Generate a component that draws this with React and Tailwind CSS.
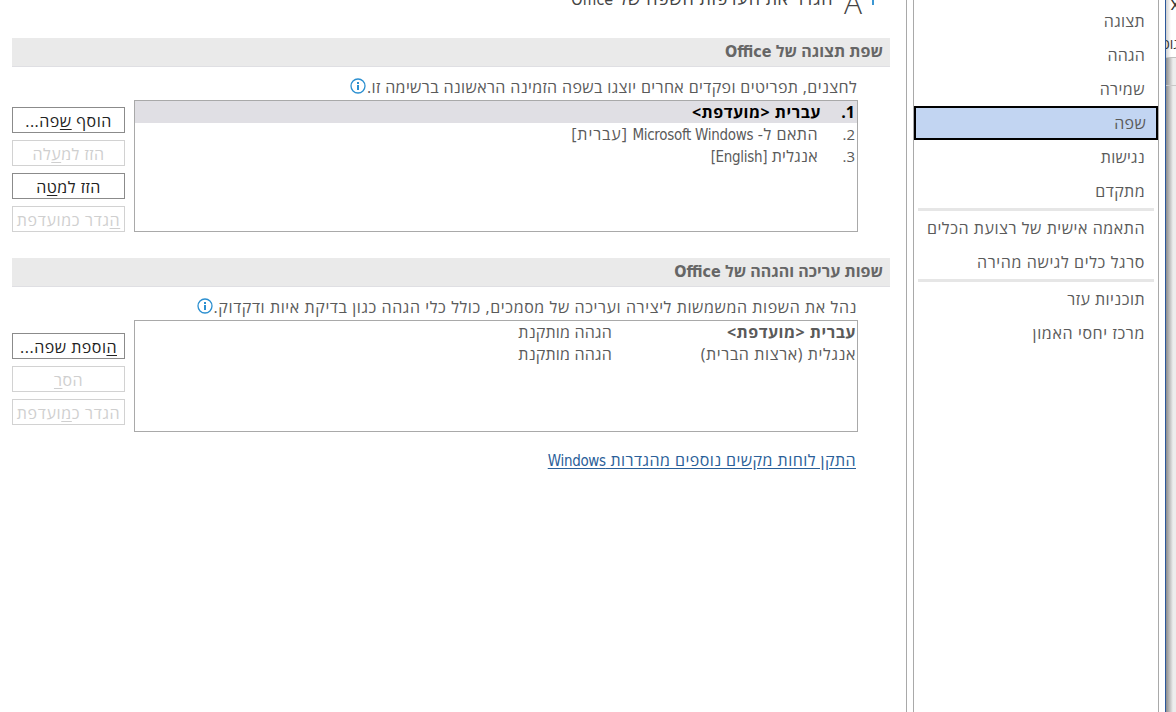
import { Fragment } from "react";

const categories = [
  { label: "תצוגה", cls: "tracking-[0.3px]" },
  { label: "הגהה", cls: "tracking-[0.2px]" },
  { label: "שמירה", cls: "tracking-[0.45px]" },
  { label: "שפה", cls: "tracking-[0.3px]", active: true },
  { label: "נגישות", cls: "tracking-[0.25px]" },
  { label: "מתקדם", cls: "tracking-[0.4px]", divider: true },
  { label: "התאמה אישית של רצועת הכלים", cls: "tracking-[0.55px]" },
  { label: "סרגל כלים לגישה מהירה", cls: "tracking-[0.62px]", divider: true },
  { label: "תוכניות עזר", cls: "tracking-[0.45px]" },
  { label: "מרכז יחסי האמון", cls: "tracking-[0.63px]" },
];

function InfoIcon() {
  return (
    <svg width="16" height="16" viewBox="0 0 16 16" className="mr-px mb-px shrink-0" fill="none">
      <circle cx="8" cy="8" r="7" stroke="#2b8fd0" strokeWidth="1.3" />
      <path d="M7 4h2v2H7zM7 7h2v5H7z" fill="#2b8fd0" />
    </svg>
  );
}

// Latin words use a narrower face than the Hebrew around them
function Latin({ children, cls = "text-[15px] tracking-[-0.3px]" }) {
  return (
    <span dir="ltr" className={`font-['DejaVu_Sans_Condensed','DejaVu_Sans',sans-serif] ${cls}`}>
      {children}
    </span>
  );
}

function Button({ before = "", hot, after = "", disabled, cls = "tracking-[0.5px]" }) {
  return (
    <button
      className={`flex h-[26px] w-[113px] items-center justify-center border bg-white pt-px whitespace-nowrap ${
        disabled ? "border-[#d2d2d2] text-[#cfcfcf]" : "border-[#8b8b8b] text-[#222]"
      }`}
    >
      <span className={cls}>
        {before}
        <span className="underline underline-offset-2">{hot}</span>
        {after}
      </span>
    </button>
  );
}

function SectionTitle({ children }) {
  return (
    <h2 className="flex h-[29px] items-center border-b border-[#dfdfe3] bg-[#eaeaea] pr-[7px] font-bold text-[#666]">
      <span>
        {children} <Latin cls="text-base">Office</Latin>
      </span>
    </h2>
  );
}

function Sidebar() {
  return (
    <nav className="w-[246px] shrink-0 border-x border-[#a9a9a9] pt-1">
      {categories.map((c) => (
        <Fragment key={c.label}>
          <div
            className={`flex h-[34px] items-center whitespace-nowrap ${
              c.active ? "border-2 border-black bg-[#c2d5f2] pr-[10px]" : "pr-[13px]"
            }`}
          >
            <span className={c.cls}>{c.label}</span>
          </div>
          {c.divider && <div className="mx-1 h-[3px] bg-[#e6e6e6]" />}
        </Fragment>
      ))}
    </nav>
  );
}

export default function App() {
  return (
    <div
      dir="rtl"
      className="flex h-[712px] w-[1176px] overflow-hidden bg-white font-['Open_Sans','DejaVu_Sans',sans-serif] text-[16px] leading-[22px] text-[#5a5a5a]"
    >
      {/* sliver of the document window behind the dialog */}
      <div className="w-[10px] shrink-0 overflow-hidden bg-linear-to-r from-[#8c8c8c] to-[#ededed] to-70% text-[#333]">
        <div className="h-[58px] border-b border-[#c0c0c0] bg-linear-to-r from-[#d0d0d0] to-white to-50%">
          <div className="-mr-1 h-[34px] text-lg leading-[6px]">x</div>
          <div className="-mr-[3px] text-sm leading-5 whitespace-nowrap">גופ</div>
        </div>
        <div className="h-7 border-b border-[#c8c8c8]" />
      </div>

      <div className="flex flex-1 border-r border-[#2b579a] pr-[6px]">
        <Sidebar />
        <main className="mr-[6px] w-[907px] shrink-0 border-r border-[#a9a9a9] pr-4 pl-3">
          <header className="flex h-[38px] pr-4 text-[#444]">
            <span className="h-[5px] w-[2px] bg-[#3c97d3]" />
            <span className="-mt-[8px] mr-[10px] w-[19px] text-[30px] font-light">A</span>
            <h1 className="-mt-[13px] mr-[10px] text-[18px] tracking-[0.55px] whitespace-nowrap">
              הגדר את העדפות השפה של <Latin cls="text-[16px] tracking-[0px]">Office</Latin>
            </h1>
          </header>

          <SectionTitle>שפת תצוגה של</SectionTitle>
          <section className="flex h-[191px] pt-[9px] pr-8">
            <div className="w-[724px]">
              <div className="flex h-6 items-center pr-px pb-[3px] whitespace-nowrap">
                <span className="tracking-[0.37px]">
                  לחצנים, תפריטים ופקדים אחרים יוצגו בשפה הזמינה הראשונה ברשימה זו.
                </span>
                <InfoIcon />
              </div>
              <ol className="h-[132px] border border-[#a9a9a9]">
                <li className="flex h-[22px] bg-[#e0dfe4] pr-[2px] font-bold text-black">
                  <span className="w-[34px]">1.</span>
                  <span className="tracking-[0.5px]">עברית &lt;מועדפת&gt;</span>
                </li>
                <li className="flex h-[22px] pr-[2px]">
                  <span className="w-[37px] text-[15px]">2.</span>
                  <span className="tracking-[0.5px]">
                    התאם ל- <Latin>Microsoft Windows</Latin> <span className="tracking-[0.9px]">[עברית]</span>
                  </span>
                </li>
                <li className="flex h-[22px] pr-[2px]">
                  <span className="w-[37px] text-[15px]">3.</span>
                  <span className="tracking-[0.3px]">
                    אנגלית <Latin cls="text-[15px] tracking-[-0.3px]">[English]</Latin>
                  </span>
                </li>
              </ol>
            </div>
            <div className="mt-[31px] mr-[9px] flex flex-col gap-[7px]">
              <Button before="הוסף " hot="ש" after="פה..." />
              <Button before="הזז למ" hot="ע" after="לה" disabled />
              <Button before="הזז למ" hot="ט" after="ה" />
              <Button hot="ה" after="גדר כמועדפת" cls="tracking-[0.65px]" disabled />
            </div>
          </section>

          <SectionTitle>שפות עריכה והגהה של</SectionTitle>
          <section className="flex pt-[9px] pr-8">
            <div className="w-[724px]">
              <div className="flex h-6 items-center pr-px pb-[3px] whitespace-nowrap">
                <span className="tracking-[0.59px]">
                  נהל את השפות המשמשות ליצירה ועריכה של מסמכים, כולל כלי הגהה כגון בדיקת איות ודקדוק.
                </span>
                <InfoIcon />
              </div>
              <ul className="h-[112px] border border-[#a9a9a9] pr-px">
                <li className="flex h-[22px]">
                  <b className="w-[244px] tracking-[0.5px]">עברית &lt;מועדפת&gt;</b>
                  <span className="tracking-[0.2px]">הגהה מותקנת</span>
                </li>
                <li className="flex h-[22px]">
                  <span className="w-[244px] tracking-[0.6px]">אנגלית (ארצות הברית)</span>
                  <span className="tracking-[0.2px]">הגהה מותקנת</span>
                </li>
              </ul>
              <a className="mt-[17px] mr-[2px] inline-block tracking-[0.45px] text-[#2a6099] underline underline-offset-2">
                התקן לוחות מקשים נוספים מהגדרות <Latin>Windows</Latin>
              </a>
            </div>
            <div className="mt-[37px] mr-[9px] flex flex-col gap-[7px]">
              <Button hot="ה" after="וספת שפה..." />
              <Button before="הס" hot="ר" disabled />
              <Button before="הגדר כ" hot="מ" after="ועדפת" cls="tracking-[0.65px]" disabled />
            </div>
          </section>
        </main>
      </div>
    </div>
  );
}
